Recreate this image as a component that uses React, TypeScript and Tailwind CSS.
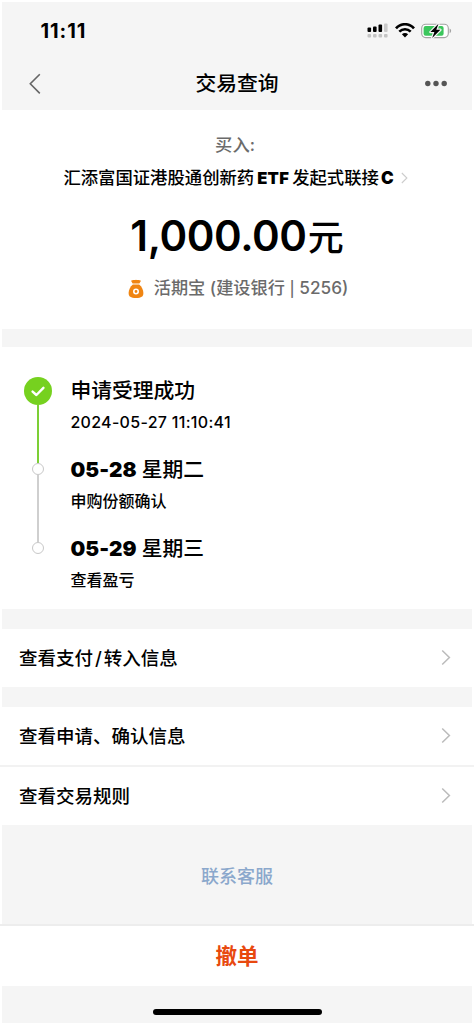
import type { ReactNode } from "react";

const steps = [
    { title: "申请受理成功", desc: "2024-05-27 11:10:41", done: true },
    { date: "05-28", title: "星期二", desc: "申购份额确认" },
    { date: "05-29", title: "星期三", desc: "查看盈亏" },
];

function Chevron({ className }: { className: string }) {
    return (
        <svg viewBox="0 0 10 18" fill="none" stroke="currentColor" className={className}>
            <path d="M1 1.5L8.6 9L1 16.5" strokeWidth="1.6" />
        </svg>
    );
}

function StatusBar() {
    return (
        <div className="flex h-[57px] items-center justify-between pl-[38.5px] pr-5">
            <span className="text-[20px] leading-6 font-bold tracking-[0.9px]">11:11</span>
            <div className="flex items-center">
                <svg width="22" height="16" viewBox="0 0 22 16">
                    <rect x="0.5" y="4.5" width="3.6" height="4.5" rx="1" fill="#000" />
                    <rect x="6" y="3.5" width="3.6" height="5.5" rx="1" fill="#000" />
                    <rect x="11.5" y="1.5" width="3.6" height="7.5" rx="1" fill="#000" />
                    <rect x="17" y="0.5" width="3.6" height="8.5" rx="1" fill="#c9c9c9" />
                    <g fill="#c4c4c4">
                        <rect x="0.5" y="11" width="3.6" height="3.6" rx="1" />
                        <rect x="6" y="11" width="3.6" height="3.6" rx="1" />
                        <rect x="11.5" y="11" width="3.6" height="3.6" rx="1" />
                        <rect x="17" y="11" width="3.6" height="3.6" rx="1" />
                    </g>
                </svg>
                <svg width="20" height="15" viewBox="0 0 20 15" className="ml-[6px]" fill="none" stroke="#000">
                    <path d="M1 5.3C6 -0.1 14 -0.1 19 5.3" strokeWidth="2.7" />
                    <path d="M4.3 8.7C7.6 5.4 12.4 5.4 15.7 8.7" strokeWidth="2.6" />
                    <path d="M10 14.4L6.9 11.3C8.6 9.7 11.4 9.7 13.1 11.3Z" fill="#000" stroke="none" />
                </svg>
                <svg width="31" height="16" viewBox="0 0 31 16" className="ml-[6px]">
                    <rect x="0.7" y="1.2" width="26.6" height="13.4" rx="4" fill="#fff" stroke="#a3a3a3" strokeWidth="1.1" />
                    <rect x="2.6" y="3" width="20" height="9.8" rx="2" fill="#3bc65c" />
                    <path d="M28.6 5.6C30.6 6.4 30.6 9.4 28.6 10.2Z" fill="#a3a3a3" />
                    <path d="M17.5 0.8L9.4 9H13.4L11.2 15L19.4 6.8H15.3Z" fill="#000" stroke="#f5f5f5" strokeWidth="2.4" paintOrder="stroke" strokeLinejoin="round" />
                </svg>
            </div>
        </div>
    );
}

function NavBar() {
    return (
        <div className="flex h-[51px] items-center justify-between pb-px pl-[26px] pr-6">
            <svg width="22" height="22" viewBox="0 0 22 22" fill="none" stroke="#666" strokeWidth="1.6">
                <path d="M11.8 1.2L2.3 10.8L11.8 20.4" />
            </svg>
            <h1 className="text-[20.8px] leading-7 font-medium">交易查询</h1>
            <svg width="24" height="8" viewBox="0 0 24 8" fill="#555">
                <circle cx="3.8" cy="3.5" r="2.7" />
                <circle cx="12" cy="3.5" r="2.7" />
                <circle cx="20.2" cy="3.5" r="2.7" />
            </svg>
        </div>
    );
}

function MoneyBag() {
    return (
        <svg width="16" height="20" viewBox="0 0 16 20" fill="#f08512">
            <path d="M3 1.8C5 0.4 6.4 1.6 8 0.8C9.6 1.6 11 0.4 13 1.8L11.4 4.6H4.6Z" />
            <path d="M4.8 5.6H11.2C13.8 7.8 15.4 11 15.4 14C15.4 17.6 13.4 19 8 19C2.6 19 0.6 17.6 0.6 14C0.6 11 2.2 7.8 4.8 5.6Z" />
            <circle cx="8" cy="12.5" r="2.2" fill="none" stroke="#fff" strokeWidth="1.6" />
        </svg>
    );
}

function Row({ children }: { children: ReactNode }) {
    return (
        <div className="flex h-[58px] items-center justify-between bg-white pl-[19px] pr-[23px]">
            <span className="text-[18.5px] leading-6 font-medium">{children}</span>
            <Chevron className="mb-[2px] h-[17px] w-[10px] text-[#bbb]" />
        </div>
    );
}

export default function App() {
    return (
        <div className="h-[1025px] w-[474px] overflow-hidden bg-white py-[2px] font-['Inter','Noto_Sans_CJK_SC',sans-serif] text-black">
            <header className="mx-[2px] h-[108px] bg-[#f5f5f5]">
                <StatusBar />
                <NavBar />
            </header>

            <section className="flex h-[219px] flex-col items-center bg-white pt-[23px]">
                <p className="mr-1 text-[17.3px] leading-6 font-medium text-[#6b6b6b]">买入:</p>
                <div className="mt-[9px] mr-[3px] flex items-center gap-[7px]">
                    <h2 className="text-[17.35px] leading-6 font-medium whitespace-nowrap">
                        汇添富国证港股通创新药<span className="mr-[3px] ml-[3px] text-[16.5px] font-black tracking-[0.3px]">ETF</span>发起式联接<span className="ml-[2px] text-[17px] font-black">C</span>
                    </h2>
                    <Chevron className="h-3 w-[7px] text-[#ccc]" />
                </div>
                <p className="mt-[16px] flex items-baseline leading-[60px] font-medium">
                    <span className="text-[42px] font-semibold tracking-[-0.4px]">1,000.00</span>
                    <span className="ml-px text-[36px]">元</span>
                </p>
                <div className="mt-2 flex items-center gap-[10px] pl-[2px]">
                    <MoneyBag />
                    <span className="text-[17.2px] leading-6 font-medium text-[#6b6b6b]">
                        活期宝 (建设银行 <span className="text-[15px]">|</span> 5256)
                    </span>
                </div>
            </section>

            <div className="mx-[2px] h-[18px] bg-[#f5f5f5]" />

            <section className="h-[262px] bg-white pt-[30px] pl-6">
                {steps.map((step, i) => (
                    <div key={i} className="flex h-[79px]">
                        <div className="flex w-7 flex-col items-center">
                            {step.done ? (
                                <>
                                    <span className="flex h-7 w-7 shrink-0 items-center justify-center rounded-full bg-[#76d11f]">
                                        <svg width="14" height="11" viewBox="0 0 14 11" fill="none" stroke="#fff" strokeWidth="2.4" strokeLinecap="round" strokeLinejoin="round">
                                            <path d="M1.6 5.6L5.4 9L12.4 1.8" />
                                        </svg>
                                    </span>
                                    <span className="-mb-[7px] w-[2px] grow bg-[#7ccf35]" />
                                </>
                            ) : (
                                <>
                                    <span className="mt-[7px] h-3 w-3 shrink-0 rounded-full border-[1.5px] border-[#c8c8c8] bg-white" />
                                    {i < steps.length - 1 && <span className="-mb-[7px] w-[2px] grow bg-[#cfcfcf]" />}
                                </>
                            )}
                        </div>
                        <div className="ml-[18.4px]">
                            <h3 className="text-[20.8px] leading-7 font-medium">
                                {step.date && <span className="mr-[5px] font-black tracking-[0.1px]">{step.date}</span>}
                                {step.title}
                            </h3>
                            <p className={step.done ? "mt-[5px] text-[16px] leading-6 font-medium tracking-[0.3px]" : "mt-[5px] text-[16px] leading-6 font-medium"}>
                                {step.desc}
                            </p>
                        </div>
                    </div>
                ))}
            </section>

            <div className="mx-[2px] h-[20px] bg-[#f5f5f5]" />
            <Row>查看支付<span className="mx-[2px]">/</span>转入信息</Row>
            <div className="mx-[2px] h-[20px] bg-[#f5f5f5]" />
            <Row>查看申请、确认信息</Row>
            <div className="h-[2px] bg-[#f2f2f2]" />
            <Row>查看交易规则</Row>

            <div className="mx-[2px] flex h-[99px] items-center justify-center bg-[#f5f5f5] pt-[5px]">
                <a className="text-[18px] leading-6 font-medium text-[#8ba8cc]">联系客服</a>
            </div>
            <button className="flex h-[62px] w-full items-center justify-center border-t-2 border-[#ededed] bg-white text-[21.5px] leading-7 font-bold text-[#e8490f]">
                撤单
            </button>
            <footer className="mx-[2px] flex h-[37px] items-end justify-center bg-[#f5f5f5] pb-2">
                <div className="h-[6px] w-[169px] rounded-full bg-black" />
            </footer>
        </div>
    );
}
